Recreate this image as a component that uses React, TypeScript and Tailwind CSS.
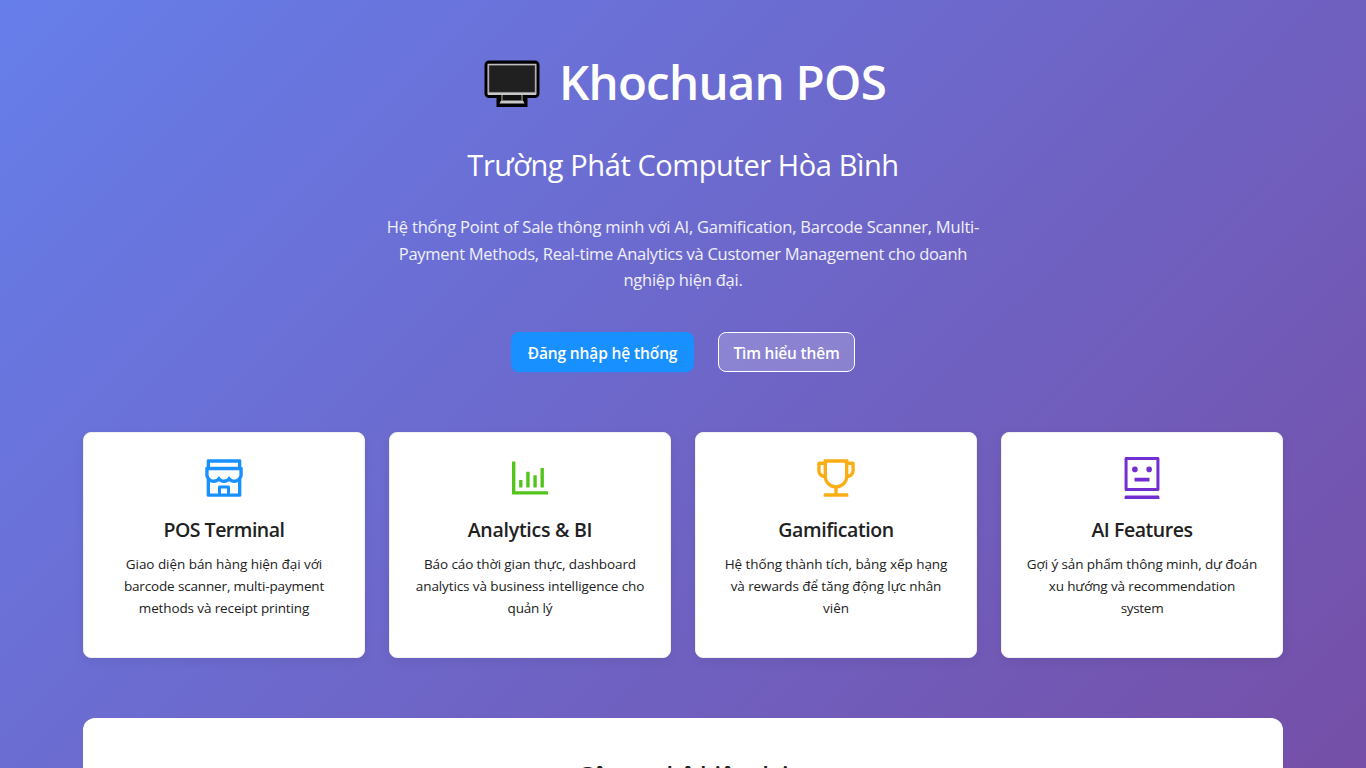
import type { ReactNode } from "react";
import { AiOutlineShop, AiOutlineBarChart, AiOutlineTrophy, AiOutlineRobot } from "react-icons/ai";

type Line = { text: string; tracking: string };

type Feature = {
  icon: ReactNode;
  title: Line;
  lines: Line[];
};

const intro: Line[] = [
  { text: "Hệ thống Point of Sale thông minh với AI, Gamification, Barcode Scanner, Multi-", tracking: "tracking-[-0.2px]" },
  { text: "Payment Methods, Real-time Analytics và Customer Management cho doanh", tracking: "tracking-[-0.275px]" },
  { text: "nghiệp hiện đại.", tracking: "tracking-[-0.22px]" },
];

const features: Feature[] = [
  {
    icon: <AiOutlineShop className="size-12 text-[#1890ff]" />,
    title: { text: "POS Terminal", tracking: "tracking-[-0.5px]" },
    lines: [
      { text: "Giao diện bán hàng hiện đại với", tracking: "tracking-[-0.05px]" },
      { text: "barcode scanner, multi-payment", tracking: "tracking-[-0.15px]" },
      { text: "methods và receipt printing", tracking: "tracking-[-0.12px]" },
    ],
  },
  {
    icon: <AiOutlineBarChart className="size-12 text-[#52c41a]" />,
    title: { text: "Analytics & BI", tracking: "tracking-[-0.25px]" },
    lines: [
      { text: "Báo cáo thời gian thực, dashboard", tracking: "tracking-[-0.1px]" },
      { text: "analytics và business intelligence cho", tracking: "tracking-[-0.105px]" },
      { text: "quản lý", tracking: "tracking-[-0.16px]" },
    ],
  },
  {
    icon: <AiOutlineTrophy className="size-12 text-[#faad14]" />,
    title: { text: "Gamification", tracking: "tracking-[-0.43px]" },
    lines: [
      { text: "Hệ thống thành tích, bảng xếp hạng", tracking: "tracking-[-0.06px]" },
      { text: "và rewards để tăng động lực nhân", tracking: "tracking-[-0.09px]" },
      { text: "viên", tracking: "tracking-normal" },
    ],
  },
  {
    icon: <AiOutlineRobot className="size-12 text-[#722ed1]" />,
    title: { text: "AI Features", tracking: "tracking-[-0.44px]" },
    lines: [
      { text: "Gợi ý sản phẩm thông minh, dự đoán", tracking: "tracking-[-0.1px]" },
      { text: "xu hướng và recommendation", tracking: "tracking-[-0.14px]" },
      { text: "system", tracking: "tracking-[-0.3px]" },
    ],
  },
];

function MonitorIcon() {
  return (
    <svg className="mt-1 h-[48px] w-[56px]" viewBox="0 0 56 48" aria-hidden="true">
      <path d="M5 0.5H51A4.5 4.5 0 0 1 55.5 5V33.5A4.5 4.5 0 0 1 51 38H43.5V47H12.5V38H5A4.5 4.5 0 0 1 0.5 33.5V5A4.5 4.5 0 0 1 5 0.5Z" fill="#000" />
      <rect x="3.5" y="3.7" width="49" height="31.3" rx="1" fill="#c8c8c8" />
      <rect x="5" y="5.2" width="46" height="27" fill="#202020" stroke="#777" strokeWidth="0.6" />
      <path d="M18.5 35H37.5V40.5H18.5Z" fill="#111" />
      <path d="M18 35V40.5M38 35V40.5" stroke="#bbb" strokeWidth="1" />
      <path d="M17 40.5H39L40.5 43.6H15.5Z" fill="#c8c8c8" />
    </svg>
  );
}

function FeatureCard({ icon, title, lines }: Feature) {
  return (
    <article className="flex h-[226px] flex-col items-center rounded-lg border border-[#f0f0f0] bg-white pt-[21px] text-[#212121] shadow-[0_4px_12px_rgba(0,0,0,0.06)]">
      {icon}
      <h3 className={`mt-3.5 text-[19.5px] leading-7 font-semibold whitespace-nowrap ${title.tracking}`}>{title.text}</h3>
      <p className="mt-[9px] text-center text-[13.5px] leading-[22px]">
        {lines.map((line) => (
          <span key={line.text} className={`block whitespace-nowrap ${line.tracking}`}>{line.text}</span>
        ))}
      </p>
    </article>
  );
}

export default function App() {
  return (
    <div className="h-screen overflow-hidden bg-[linear-gradient(135deg,#667eea_0%,#764ba2_100%)] bg-[length:100%_940px] bg-no-repeat font-['Open_Sans','Noto_Sans',sans-serif]">
      <main className="mx-auto flex w-[1200px] flex-col pt-[52px]">
        <header className="flex flex-col items-center text-white">
          <h1 className="flex h-[60px] items-center gap-[19px] pl-[4px] text-[47.5px] leading-[60px] font-semibold tracking-[-0.75px] whitespace-nowrap">
            <MonitorIcon />
            <span>Khochuan POS</span>
          </h1>
          <h2 className="mt-[33px] text-[29px] leading-[40px] font-normal tracking-[-0.41px]">Trường Phát Computer Hòa Bình</h2>
          <p className="mt-[29.3px] text-center text-[16.5px] leading-[26.4px] text-white/90">
            {intro.map((line) => (
              <span key={line.text} className={`block whitespace-nowrap ${line.tracking}`}>{line.text}</span>
            ))}
          </p>
          <div className="mt-[38.5px] flex h-10 gap-6 text-[15.5px] font-semibold">
            <button className="w-[183px] rounded-lg bg-[#1890ff] pt-[3px] tracking-[-0.12px] whitespace-nowrap shadow-[0_2px_0_rgba(5,145,255,0.1)]">Đăng nhập hệ thống</button>
            <button className="w-[137px] rounded-lg border border-white bg-white/20 pt-[3px] tracking-[-0.19px] whitespace-nowrap">Tìm hiểu thêm</button>
          </div>
        </header>
        <section className="mt-[60px] grid grid-cols-4 gap-6">
          {features.map((feature) => (
            <FeatureCard key={feature.title.text} {...feature} />
          ))}
        </section>
        <section className="mt-[60px] h-[300px] rounded-xl bg-white pt-[41px] text-center">
          <h2 className="text-[23.5px] leading-8 font-semibold tracking-[-0.37px] text-[#212121]">Công nghệ hiện đại</h2>
        </section>
      </main>
    </div>
  );
}
